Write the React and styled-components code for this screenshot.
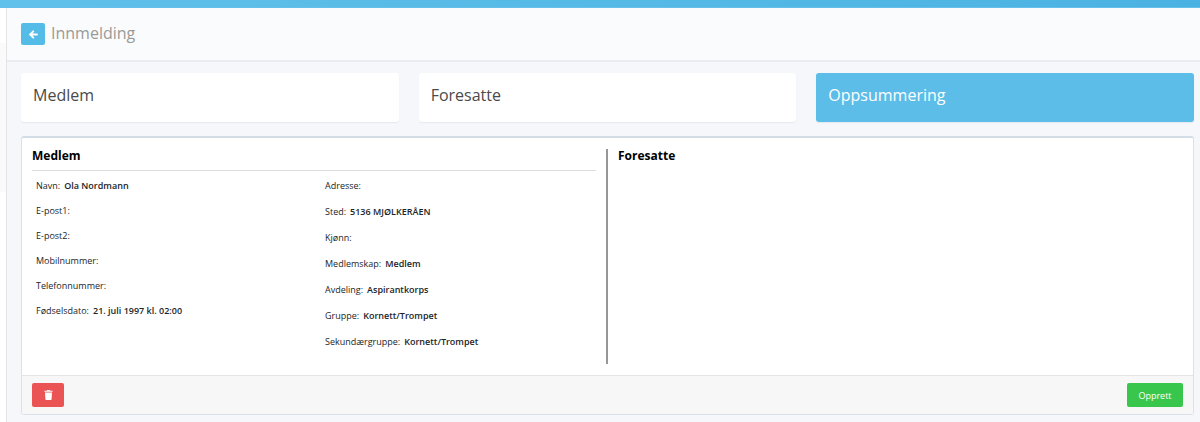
import styled, { createGlobalStyle } from 'styled-components';

const GlobalStyle = createGlobalStyle`
    * {
        box-sizing: border-box;
    }
    body {
        margin: 0;
        background-color: #f5f7fb;
        color: #212529;
        font-family: "Segoe UI", "Open Sans", "Noto Sans", sans-serif;
        font-size: 9px;
    }
`

const memberFields = [
    { label: 'Navn', value: 'Ola Nordmann' },
    { label: 'E-post1' },
    { label: 'E-post2' },
    { label: 'Mobilnummer' },
    { label: 'Telefonnummer' },
    { label: 'Fødselsdato', value: '21. juli 1997 kl. 02:00' },
];

const detailFields = [
    { label: 'Adresse' },
    { label: 'Sted', value: '5136 MJØLKERÅEN' },
    { label: 'Kjønn' },
    { label: 'Medlemskap', value: 'Medlem' },
    { label: 'Avdeling', value: 'Aspirantkorps' },
    { label: 'Gruppe', value: 'Kornett/Trompet' },
    { label: 'Sekundærgruppe', value: 'Kornett/Trompet' },
];

const Fields = ({ items, gap }) => (
    <FieldList $gap={gap}>
        {items.map((item) => (
            <Field key={item.label}>
                <FieldLabel>{item.label}:</FieldLabel>
                <FieldValue>{item.value}</FieldValue>
            </Field>
        ))}
    </FieldList>
)

const App = () => {
    return (
        <Page>
            <GlobalStyle />
            <TopBar />
            <Shell>
                <Sidebar>
                    <SidebarMenu />
                </Sidebar>
                <Main>
                    <Header>
                        <BackButton type="button" aria-label="Tilbake">
                            <svg width="9" height="9" viewBox="0 0 9 9" fill="none" stroke="#fff" strokeWidth="1.8" strokeLinecap="round" strokeLinejoin="round">
                                <path d="M8 4.5H1.2M4.3 1.3L1.1 4.5l3.2 3.2" />
                            </svg>
                        </BackButton>
                        <Title>Innmelding</Title>
                    </Header>
                    <Content>
                        <Steps>
                            <Step type="button">Medlem</Step>
                            <Step type="button">Foresatte</Step>
                            <Step type="button" $active aria-current="step">Oppsummering</Step>
                        </Steps>
                        <Panel>
                            <PanelBody>
                                <Section>
                                    <SectionTitle $line>Medlem</SectionTitle>
                                    <Columns>
                                        <Fields items={memberFields} gap={7} />
                                        <Fields items={detailFields} gap={8} />
                                    </Columns>
                                </Section>
                                <Section $divided>
                                    <SectionTitle>Foresatte</SectionTitle>
                                </Section>
                            </PanelBody>
                            <PanelFooter>
                                <ActionButton type="button" $width={32} $color="#ea5455" aria-label="Slett">
                                    <svg width="9" height="10" viewBox="0 0 9 10" fill="#fff">
                                        <path d="M.4.8h2.3L3.2 0h2.6l.5.8h2.3v1H.4zM1 2.4h7L7.6 9.2a.8.8 0 0 1-.8.8H2.2a.8.8 0 0 1-.8-.8z" />
                                    </svg>
                                </ActionButton>
                                <ActionButton type="button" $width={56} $color="#39c64c">Opprett</ActionButton>
                            </PanelFooter>
                        </Panel>
                    </Content>
                </Main>
            </Shell>
        </Page>
    )
}

const Page = styled.div`
    display: flex;
    flex-direction: column;
    min-height: 100vh;
`
const TopBar = styled.div`
    height: 8px;
    background: linear-gradient(90deg, #60c1ea, #4ab2e2);
    border-bottom: 1px solid #66bfe8;
`
const Shell = styled.div`
    display: flex;
    flex: 1;
`
const Sidebar = styled.aside`
    width: 7px;
    padding-top: 35px;
    background-color: #fff;
    border-right: 1px solid #e1e5e8;
`
const SidebarMenu = styled.div`
    height: 149px;
    background-color: #fafafa;
`
const Main = styled.main`
    flex: 1;
    min-width: 0;
`
const Header = styled.header`
    display: flex;
    align-items: center;
    gap: 6px;
    height: 54px;
    padding: 0 14px;
    background-color: #fafbfd;
    border-bottom: 2px solid #e9ecf0;
`
const BackButton = styled.button`
    display: flex;
    align-items: center;
    justify-content: center;
    width: 24px;
    height: 22px;
    padding: 0;
    border: 0;
    border-radius: 2px;
    background-color: #55bbe7;
    cursor: pointer;
`
const Title = styled.h1`
    margin: 0;
    padding-bottom: 2px;
    color: #9a9a96;
    font-size: 16px;
    font-weight: 400;
    line-height: 24px;
`
const Content = styled.div`
    padding: 11px 6px 7px 14px;
`
const Steps = styled.div`
    display: grid;
    grid-template-columns: repeat(3, 1fr);
    gap: 20px;
    margin-bottom: 14px;
`
const Step = styled.button`
    height: 49px;
    padding: 0 12px 6px;
    border: 0;
    border-radius: 3px;
    background-color: ${(props) => (props.$active ? '#5bbde8' : '#fff')};
    color: ${(props) => (props.$active ? '#fff' : '#4a4a4a')};
    box-shadow: 0 1px 1px #e6e9ee;
    font-family: inherit;
    font-size: 16px;
    line-height: 24px;
    text-align: left;
    cursor: pointer;
`
const Panel = styled.section`
    border: 1px solid #dae1e8;
    border-top: 2px solid #d2dde5;
    border-radius: 3px;
    background-color: #fff;
`
const PanelBody = styled.div`
    display: grid;
    grid-template-columns: 1fr 1fr;
    min-height: 237px;
    padding: 11px 13px 11px 10px;
`
const Section = styled.section`
    padding: ${(props) => (props.$divided ? '0 0 0 10px' : '0 10px 0 0')};
    border-left: ${(props) => (props.$divided ? '2px solid #979797' : '0')};
`
const SectionTitle = styled.h2`
    height: 22px;
    margin: 0;
    border-bottom: 1px solid ${(props) => (props.$line ? '#dcdcdc' : 'transparent')};
    color: #000;
    font-size: 12px;
    font-weight: 700;
    line-height: 14px;
`
const Columns = styled.div`
    display: grid;
    grid-template-columns: 1fr 1fr;
    gap: 22px;
    padding: 5px 4px 0;
`
const FieldList = styled.dl`
    display: flex;
    flex-direction: column;
    gap: ${(props) => props.$gap}px;
    margin: 0;
`
const Field = styled.div`
    display: flex;
    align-items: center;
    gap: 4px;
    height: 18px;
`
const FieldLabel = styled.dt`
    font-size: 9px;
`
const FieldValue = styled.dd`
    margin: 0;
    font-size: 9px;
    font-weight: 600;
`
const PanelFooter = styled.footer`
    display: flex;
    align-items: center;
    justify-content: space-between;
    height: 39px;
    padding: 0 10px;
    border-top: 1px solid #e4e4e4;
    background-color: #f7f7f7;
`
const ActionButton = styled.button`
    display: flex;
    align-items: center;
    justify-content: center;
    width: ${(props) => props.$width}px;
    height: 24px;
    padding: 0;
    border: 0;
    border-radius: 2px;
    background-color: ${(props) => props.$color};
    color: #fff;
    font-family: inherit;
    font-size: 9px;
    cursor: pointer;
`
export default App
